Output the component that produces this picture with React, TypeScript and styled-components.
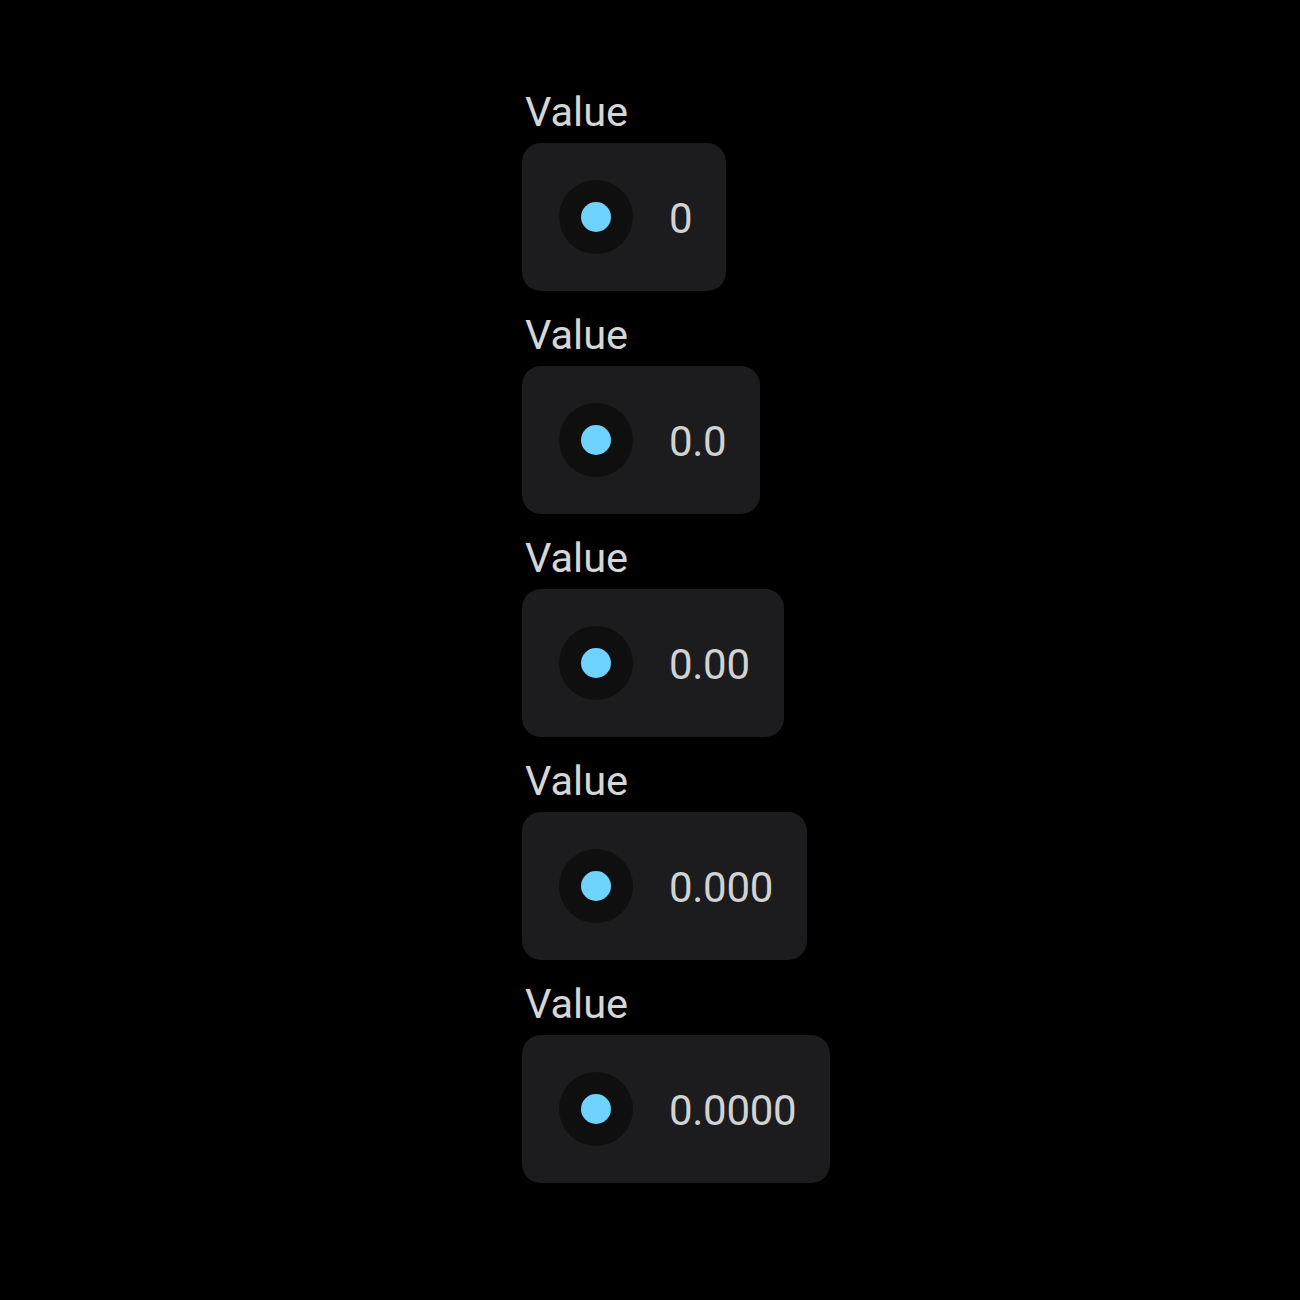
import React from "react";
import styled, { createGlobalStyle } from "styled-components";

const Global = createGlobalStyle`
  html, body { margin: 0; padding: 0; background: #000; }
  body { font-family: Roboto, "Noto Sans", sans-serif; }
`;

const Page = styled.div`
  min-height: 1300px;
  background: #000;
  display: flex;
  flex-direction: column;
  align-items: flex-start;
  padding: 86px 0 0 522px;
  box-sizing: border-box;
  gap: 18px;
`;

const Field = styled.div`
  display: flex;
  flex-direction: column;
  align-items: flex-start;
  gap: 9px;
`;

const Label = styled.div`
  font-size: 41.5px;
  line-height: 48px;
  padding-top: 2px;
  margin-bottom: -2px;
  color: #d6d6d6;
  padding-left: 3px;
`;

const Card = styled.div`
  display: flex;
  align-items: center;
  gap: 36px;
  height: 148px;
  box-sizing: border-box;
  padding: 0 34px 0 37px;
  background: #1c1c1e;
  border-radius: 19px;
`;

const Knob = styled.div`
  width: 74px;
  height: 74px;
  border-radius: 50%;
  background: #0f0f0f;
  display: flex;
  align-items: center;
  justify-content: center;
`;

const Dot = styled.div`
  width: 30px;
  height: 30px;
  border-radius: 50%;
  background: #6fd2ff;
`;

const Value = styled.span`
  font-size: 42px;
  line-height: 48px;
  padding-top: 3px;
  color: #d2d2d2;
  letter-spacing: -0.3px;
`;

const values = ["0", "0.0", "0.00", "0.000", "0.0000"];

export default function App() {
  return (
    <>
      <Global />
      <Page>
        {values.map((v) => (
          <Field key={v}>
            <Label>Value</Label>
            <Card>
              <Knob>
                <Dot />
              </Knob>
              <Value>{v}</Value>
            </Card>
          </Field>
        ))}
      </Page>
    </>
  );
}
